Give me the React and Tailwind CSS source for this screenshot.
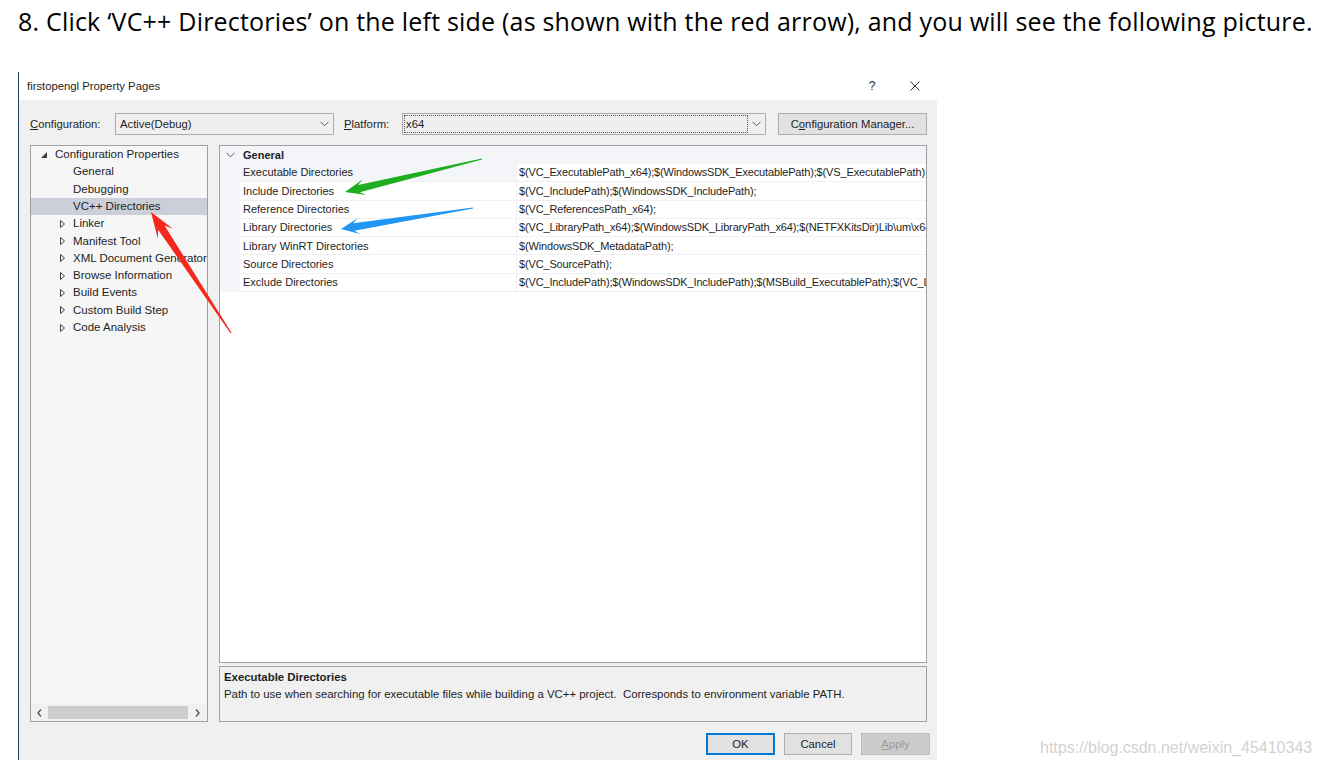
import React from "react";

const treeItems = [
  { label: "General" },
  { label: "Debugging" },
  { label: "VC++ Directories", selected: true },
  { label: "Linker", folder: true },
  { label: "Manifest Tool", folder: true },
  { label: "XML Document Generator", folder: true },
  { label: "Browse Information", folder: true },
  { label: "Build Events", folder: true },
  { label: "Custom Build Step", folder: true },
  { label: "Code Analysis", folder: true },
];

const props = [
  ["Executable Directories", "$(VC_ExecutablePath_x64);$(WindowsSDK_ExecutablePath);$(VS_ExecutablePath);$(MSBuild_ExecutablePath);$(FxCopDir);$(PATH);"],
  ["Include Directories", "$(VC_IncludePath);$(WindowsSDK_IncludePath);"],
  ["Reference Directories", "$(VC_ReferencesPath_x64);"],
  ["Library Directories", "$(VC_LibraryPath_x64);$(WindowsSDK_LibraryPath_x64);$(NETFXKitsDir)Lib\\um\\x64"],
  ["Library WinRT Directories", "$(WindowsSDK_MetadataPath);"],
  ["Source Directories", "$(VC_SourcePath);"],
  ["Exclude Directories", "$(VC_IncludePath);$(WindowsSDK_IncludePath);$(MSBuild_ExecutablePath);$(VC_LibraryPath_x64);"],
];

// tapered screenshot-style arrow, tail -> tip
function arrowPoints(tx, ty, hx, hy, head, half, shaft) {
  const dx = hx - tx;
  const dy = hy - ty;
  const len = Math.hypot(dx, dy);
  const ux = dx / len;
  const uy = dy / len;
  const nx = -uy;
  const ny = ux;
  const bx = hx - ux * head;
  const by = hy - uy * head;
  const kx = hx - ux * head * 0.72;
  const ky = hy - uy * head * 0.72;
  const pts = [
    [tx + nx * 0.6, ty + ny * 0.6],
    [kx + nx * shaft, ky + ny * shaft],
    [bx + nx * half, by + ny * half],
    [hx, hy],
    [bx - nx * half, by - ny * half],
    [kx - nx * shaft, ky - ny * shaft],
    [tx - nx * 0.6, ty - ny * 0.6],
  ];
  return pts.map((p) => p.join(",")).join(" ");
}

function Chevron({ className = "" }) {
  return (
    <svg width="9" height="6" viewBox="0 0 9 6" className={className}>
      <polyline points="0.5,0.8 4.5,4.8 8.5,0.8" fill="none" stroke="#555" strokeWidth="1" />
    </svg>
  );
}

function Select({ value, width, focused }) {
  return (
    <div className={`shrink-0 h-full border border-[#acacac] bg-[#efefef] flex items-center ${width}`}>
      {focused ? (
        <div className="ml-[1px] flex-1 h-[18px] border border-dotted border-[#555] flex items-center pl-[1px]">
          {value}
        </div>
      ) : (
        <div className="flex-1 pl-[4px]">{value}</div>
      )}
      <div className="w-[17px] flex justify-center">
        <Chevron />
      </div>
    </div>
  );
}

export default function App() {
  return (
    <div className="relative w-[1320px] h-[767px] bg-white overflow-hidden">
      <h1 className="pl-[18px] pt-[6px] text-[25px] leading-[30px] tracking-[0.2px] text-black font-['Open_Sans',sans-serif] whitespace-nowrap">
        8. Click ‘VC++ Directories’ on the left side (as shown with the red arrow), and you will see the following picture.
      </h1>

      <div className="ml-[18px] mt-[36px] w-[919px] h-[688px] border-l border-[#1f3c66] flex flex-col font-['Liberation_Sans',Arial,sans-serif] text-[11.3px] text-[#1e1e1e]">
        {/* title bar */}
        <div className="h-[28px] flex items-center pl-[8px] pr-[17px] bg-white">
          <span>firstopengl Property Pages</span>
          <span className="ml-auto w-[12px] text-center text-[12px]">?</span>
          <svg width="10" height="10" viewBox="0 0 10 10" className="ml-[32px]">
            <path d="M0.5 0.5 L9.5 9.5 M9.5 0.5 L0.5 9.5" stroke="#333" strokeWidth="1" />
          </svg>
        </div>

        {/* body */}
        <div className="flex-1 bg-[#f0f0f0] flex flex-col pl-[11px] pr-[10px]">
          <div className="mt-[13px] h-[22px] flex items-center">
            <span className="w-[85px] shrink-0">
              <span className="underline">C</span>onfiguration:
            </span>
            <Select value="Active(Debug)" width="w-[219px]" />
            <span className="ml-[10px] w-[58px] shrink-0">
              <span className="underline">P</span>latform:
            </span>
            <Select value="x64" width="w-[364px]" focused />
            <button className="ml-[12px] w-[149px] shrink-0 h-full border border-[#adadad] bg-[#e1e1e1]">
              C<span className="underline">o</span>nfiguration Manager...
            </button>
          </div>

          <div className="mt-[10px] h-[577px] flex gap-[11px]">
            {/* tree */}
            <div className="w-[178px] shrink-0 border border-[#a0a0a0] bg-[#f6f6f6] flex flex-col overflow-hidden text-[11.5px]">
              <div className="flex-1 overflow-hidden">
                <div className="h-[17.3px] flex items-center whitespace-nowrap">
                  <div className="w-[24px] shrink-0 flex justify-center pl-[1px]">
                    <svg width="6" height="6" viewBox="0 0 6 6">
                      <polygon points="6,0 6,6 0,6" fill="#404040" />
                    </svg>
                  </div>
                  <span>Configuration Properties</span>
                </div>
                {treeItems.map((item) => (
                  <div
                    key={item.label}
                    className={`h-[17.3px] flex items-center whitespace-nowrap ${item.selected ? "bg-[#cbcfd9]" : ""}`}
                  >
                    <div className="w-[42px] shrink-0 flex justify-end pr-[8px]">
                      {item.folder && (
                        <svg width="5" height="8" viewBox="0 0 5 8">
                          <polygon points="0.5,0.5 4.5,4 0.5,7.5" fill="none" stroke="#404040" strokeWidth="1" />
                        </svg>
                      )}
                    </div>
                    <span>{item.label}</span>
                  </div>
                ))}
              </div>
              <div className="h-[17px] flex items-center bg-[#f0f0f0]">
                <div className="w-[17px] flex justify-center">
                  <svg width="5" height="8" viewBox="0 0 5 8">
                    <polyline points="4,0.5 1,4 4,7.5" fill="none" stroke="#555" strokeWidth="1.4" />
                  </svg>
                </div>
                <div className="w-[140px] h-[13px] bg-[#cdcdcd]" />
                <div className="flex-1 flex justify-center">
                  <svg width="5" height="8" viewBox="0 0 5 8">
                    <polyline points="1,0.5 4,4 1,7.5" fill="none" stroke="#555" strokeWidth="1.4" />
                  </svg>
                </div>
              </div>
            </div>

            {/* right */}
            <div className="flex-1 min-w-0 flex flex-col gap-[3px]">
              <div className="flex-1 border border-[#a0a0a0] bg-white overflow-hidden text-[11px]">
                <div className="h-[18px] flex items-center bg-[#f3f5f9]">
                  <div className="w-[20px] shrink-0 flex justify-center">
                    <Chevron />
                  </div>
                  <span className="pl-[3px] font-bold">General</span>
                </div>
                {props.map(([name, value], i) => (
                  <div key={name} className="h-[18.3px] flex">
                    <div className="w-[20px] shrink-0 bg-[#f3f5f9]" />
                    <div
                      className={`w-[276px] shrink-0 flex items-center pl-[3px] border-b border-[#f0f0f0] ${i === 0 ? "bg-[#f3f5f9]" : ""}`}
                    >
                      {name}
                    </div>
                    <div className="flex-1 min-w-0 flex items-center pl-[2px] border-l border-b border-[#f0f0f0] whitespace-nowrap overflow-hidden tracking-[-0.15px]">
                      {value}
                    </div>
                  </div>
                ))}
              </div>
              <div className="h-[56px] shrink-0 border border-[#a0a0a0] bg-[#f0f0f0] pl-[4px] pt-[3px] text-[11.4px]">
                <div className="font-bold leading-[14px]">Executable Directories</div>
                <div className="mt-[3px] leading-[14px]">
                  Path to use when searching for executable files while building a VC++ project.&nbsp; Corresponds to environment variable PATH.
                </div>
              </div>
            </div>
          </div>

          <div className="mt-[11px] h-[22px] flex justify-end gap-[9px] mr-[-3px]">
            <button className="w-[69px] h-full border border-[#0078d7] shadow-[inset_0_0_0_1px_#0078d7] bg-[#e1e1e1]">OK</button>
            <button className="w-[68px] h-full border border-[#adadad] bg-[#e1e1e1]">Cancel</button>
            <button className="w-[69px] h-full border border-[#bfbfbf] bg-[#cccccc] text-[#9a9a9a]">
              <span className="underline">A</span>pply
            </button>
          </div>
        </div>
      </div>

      <div className="absolute left-[1040px] top-[738px] text-[16px] leading-[20px] text-[#d2d2d2] font-['Liberation_Sans',Arial,sans-serif]">
        https://blog.csdn.net/weixin_45410343
      </div>

      <svg className="absolute inset-0 pointer-events-none" width="1320" height="767">
        <polygon points={arrowPoints(482, 159, 345, 192, 20, 8, 3.8)} fill="#1fae1f" />
        <polygon points={arrowPoints(473, 208, 341, 229, 18, 8, 3.8)} fill="#2196f3" />
        <polygon points={arrowPoints(231, 333, 151, 212, 26, 9, 3.8)} fill="#f5281e" />
      </svg>
    </div>
  );
}
